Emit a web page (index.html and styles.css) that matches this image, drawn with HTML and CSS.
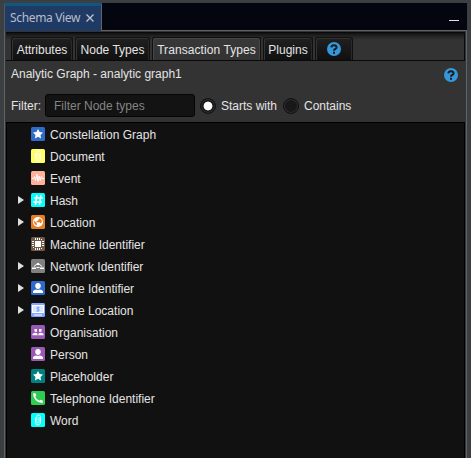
FILE: index.html
```html
<!DOCTYPE html>
<html lang="en">
<head>
<meta charset="utf-8">
<title>Schema View</title>
<link rel="stylesheet" href="styles.css">
</head>
<body>
<svg width="0" height="0" class="defs">
  <symbol id="star" viewBox="0 0 14 14"><path fill="#fff" d="M7 2.1 8.6 5.1 12 5.6 9.5 8 10.1 11.5 7 9.8 3.9 11.5 4.5 8 2 5.6 5.4 5.1Z"/></symbol>
  <symbol id="clip" viewBox="0 0 14 14"><path fill="none" stroke="#fff" stroke-width=".9" d="M4.5 4.5V9.5Q4.5 12 7 12T9.5 9.5V4Q9.5 2 7.5 2T5.8 4V8.8Q5.8 10 7 10T8.1 8.8V4"/></symbol>
  <symbol id="person" viewBox="0 0 14 14"><path fill="#fff" d="M7 2C8.8 2 9.8 3.2 9.8 4.7S8.7 8 7 8 4.2 6.2 4.2 4.7 5.2 2 7 2ZM2 12V10.5Q2.2 9 5 8.5Q7 9.4 9 8.5Q11.8 9 12 10.5V12Z"/></symbol>
  <symbol id="help" viewBox="0 0 14 14"><circle cx="7" cy="7" r="7" fill="#3498db"/><path fill="none" stroke="#1c1c1c" stroke-width="2" d="M4.3 5.4Q4.6 3.2 7 3.2T9.6 5.2Q9.6 6.4 8.3 7T7 8.7M7 9.8V11.7"/></symbol>
</svg>
<div class="window">
  <div class="titlebar">
    <div class="title"><span>Schema View</span><svg width="8" height="8" viewBox="0 0 8 8"><path d="M.5 .5 7.5 7.5M7.5 .5 .5 7.5" stroke="#c0c6ce" stroke-width="1.3"/></svg></div>
    <div class="minimize"></div>
  </div>
  <div class="panel">
    <div class="tabs">
      <div class="tab attributes"><span>Attributes</span></div>
      <div class="tab nodes"><span>Node Types</span></div>
      <div class="tab transactions"><span>Transaction Types</span></div>
      <div class="tab plugins"><span>Plugins</span></div>
      <div class="tab about"><svg width="14" height="14"><use href="#help"/></svg></div>
    </div>
    <div class="heading"><span class="graph-name">Analytic Graph - analytic graph1</span><svg width="14" height="14"><use href="#help"/></svg></div>
    <div class="filter">
      <span class="filter-label">Filter:</span>
      <div class="field"><span>Filter Node types</span></div>
      <i class="radio on"></i><span class="starts">Starts with</span>
      <i class="radio"></i><span class="contains">Contains</span>
    </div>
    <div class="tree">
      <div class="row"><i></i><svg class="icon blue"><use href="#star"/></svg><span>Constellation Graph</span></div>
      <div class="row"><i></i><svg class="icon yellow"><use href="#clip"/></svg><span>Document</span></div>
      <div class="row"><i></i><svg class="icon salmon" viewBox="0 0 14 14"><path fill="none" stroke="#fff" d="M1 7.5H2.5L3.5 5.5 4.5 9.5 6 3.2 7 10.5 8.2 5 9.3 9.5 10.3 5.5 11.3 7.5H13"/></svg><span>Event</span></div>
      <div class="row"><i class="arrow"></i><svg class="icon cyan" viewBox="0 0 14 14"><path fill="none" stroke="#fff" stroke-width="1.6" d="M5.8 2 4.5 12M9.8 2 8.5 12M3 5H12M2 9H11"/></svg><span>Hash</span></div>
      <div class="row"><i class="arrow"></i><svg class="icon orange" viewBox="0 0 14 14"><circle cx="7" cy="7" r="5" fill="#fff"/><path fill="#e67e22" d="M3 5.5 5.8 8V10.8Q3.2 10 3 7ZM5.5 6 6.8 5.8 8 4 8.6 3.2Q10.8 4.2 11 6.5L9.8 8.4 8.5 7.2H6Z"/></svg><span>Location</span></div>
      <div class="row"><i></i><svg class="icon brown" viewBox="0 0 14 14"><path fill="#fff" d="M4 4H10V10H4Z"/><path fill="none" stroke="#fff" d="M4.5 1V3M6.5 1V3M8.5 1V3M10.5 2V3M4.5 11V13M6.5 11V13M8.5 11V13M10.5 11V12M1 4.5H3M1 6.5H3M1 8.5H3M2 10.5H3M11 4.5H13M11 6.5H13M11 8.5H13"/></svg><span>Machine Identifier</span></div>
      <div class="row"><i class="arrow"></i><svg class="icon gray" viewBox="0 0 14 14"><path fill="#fff" d="M1 8.5H5V10H1ZM9 8.5H13V10H9ZM6 4H8V6H6Z"/><path fill="none" stroke="#fff" d="M3 7.5 6.5 4.5M7.5 4.5 11 7.5M5.5 8.5H8.5"/></svg><span>Network Identifier</span></div>
      <div class="row"><i class="arrow"></i><svg class="icon blue"><use href="#person"/></svg><span>Online Identifier</span></div>
      <div class="row"><i class="arrow"></i><svg class="icon peri" viewBox="0 0 14 14"><path fill="#fff" d="M1 2H13V10H1ZM3 11.5H11V12.5H3Z"/><path fill="#dce6ff" d="M2 3H12V9H2Z"/><path fill="none" stroke="#82a5ff" d="M8.5 4.5H6V6H8V8H5.5M7 3.5V9"/></svg><span>Online Location</span></div>
      <div class="row"><i></i><svg class="icon purple" viewBox="0 0 14 14"><path fill="#fff" d="M3.5 4H6V6.7H3.5ZM8 4H10.5V6.7H8ZM1.5 10.3V9Q2 8 4.5 7.8Q6.8 8 7 9Q7.3 8 9.5 7.8Q12 8 12.5 9V10.3Z"/><path stroke="#9b59b6" d="M7 8V10"/></svg><span>Organisation</span></div>
      <div class="row"><i></i><svg class="icon purple"><use href="#person"/></svg><span>Person</span></div>
      <div class="row"><i></i><svg class="icon teal"><use href="#star"/></svg><span>Placeholder</span></div>
      <div class="row"><i></i><svg class="icon green" viewBox="0 0 14 14"><path fill="#fff" d="M2 2.4 4.3 2 5.3 4.5 4.2 5.8Q5.5 8.3 8.2 9.8L9.4 8.7 12 9.7 11.6 12Q7.8 12.3 4.8 9.3 2 6.4 2 2.4Z"/></svg><span>Telephone Identifier</span></div>
      <div class="row"><i></i><svg class="icon cyan"><use href="#clip"/></svg><span>Word</span></div>
    </div>
  </div>
</div>
</body>
</html>
```
FILE: styles.css
```css
* { box-sizing: border-box; }
body { margin: 0; height: 458px; overflow: hidden; background: #3c3f41; color: #e4e4e4; font: 12px/16px "Liberation Sans", Arial, sans-serif; }
svg { display: block; flex: none; }
span { white-space: nowrap; }
.defs { position: absolute; }
.window { margin: 3px 4px 0; height: 455px; }
.titlebar { height: 28px; display: flex; justify-content: space-between; background: #03060f; border-bottom: 1px solid #616365; }
.title { width: 98px; height: 28px; padding: 0 0 2px 5px; border-top: 3px solid #105681; border-right: 1px solid #616365; border-left: 1px solid #55585a; background: #203a66; display: flex; align-items: center; gap: 6px; font: 12px/16px "Noto Sans", sans-serif; color: #b7bdc7; }
.title span { width: 70px; letter-spacing: -.35px; }
.title svg { margin-bottom: -1px; }
.minimize { width: 10px; height: 1px; margin: 17px 8px 0 0; background: #e2e2e2; }
.panel { height: 427px; border: solid #616365; border-width: 0 1px 0 1px; background: #333; padding: 1px 1px 0; }
.tabs { display: flex; height: 29px; padding: 4px 0 0 5px; gap: 2px; border: 1px solid #090909; border-left: 0; background: linear-gradient(#111 0, #222 3px, #333 7px); }
.tab { height: 23px; display: flex; align-items: center; justify-content: center; background: linear-gradient(#202020, #101010); border: 1px solid #101010; border-bottom: 0; border-radius: 3px 3px 0 0; box-shadow: inset 1px 1px #333, inset -1px 0 #292929; padding-top: 2px; }
.attributes { width: 62px; }
.nodes { width: 75px; }
.transactions { width: 109px; background: linear-gradient(#383838, #333); box-shadow: inset 1px 1px #464646, inset -1px 0 #464646; }
.transactions span { letter-spacing: .08px; }
.plugins { width: 50px; }
.about { width: 38px; padding-top: 0; }
.heading { height: 28px; padding: 0 7px 0 5px; display: flex; align-items: center; justify-content: space-between; }
.graph-name { padding-bottom: 2px; }
.filter { height: 33px; display: flex; align-items: center; padding-left: 5px; }
.filter > span { padding-top: 1px; }
.filter-label { width: 34px; }
.field { width: 150px; height: 23px; padding: 3px 8px; border: 1px solid #050505; border-radius: 3px; background: #131313; color: #858585; margin-right: 5px; }
.radio { width: 16px; height: 16px; border: 1px solid #111; border-radius: 50%; background: #181818; box-shadow: inset 0 0 0 1px #303030; margin: 1px 5px 0 0; }
.radio.on { background: radial-gradient(circle, #fff 4px, #181818 4.8px); }
.starts { width: 62px; }
.tree { height: 336px; border: 1px solid #000; border-bottom: 0; background: #111; }
.row { height: 22px; display: flex; align-items: center; padding-left: 11px; }
.row span { padding-top: 2px; }
.row i { width: 6px; height: 8px; margin-right: 7px; }
.arrow { background: #dedede; clip-path: polygon(0 0, 100% 50%, 0 100%); }
.icon { width: 14px; height: 14px; border-radius: 1.5px; margin-right: 5px; }
.blue { background: #2f6bcb; }
.yellow { background: #ffff65; }
.salmon { background: #ffb199; }
.cyan { background: #00ffff; }
.orange { background: #e67e22; }
.brown { background: #725947; }
.gray { background: #808080; }
.peri { background: #82a5ff; }
.purple { background: #9b59b6; }
.teal { background: #008080; }
.green { background: #2ecc50; }
```
